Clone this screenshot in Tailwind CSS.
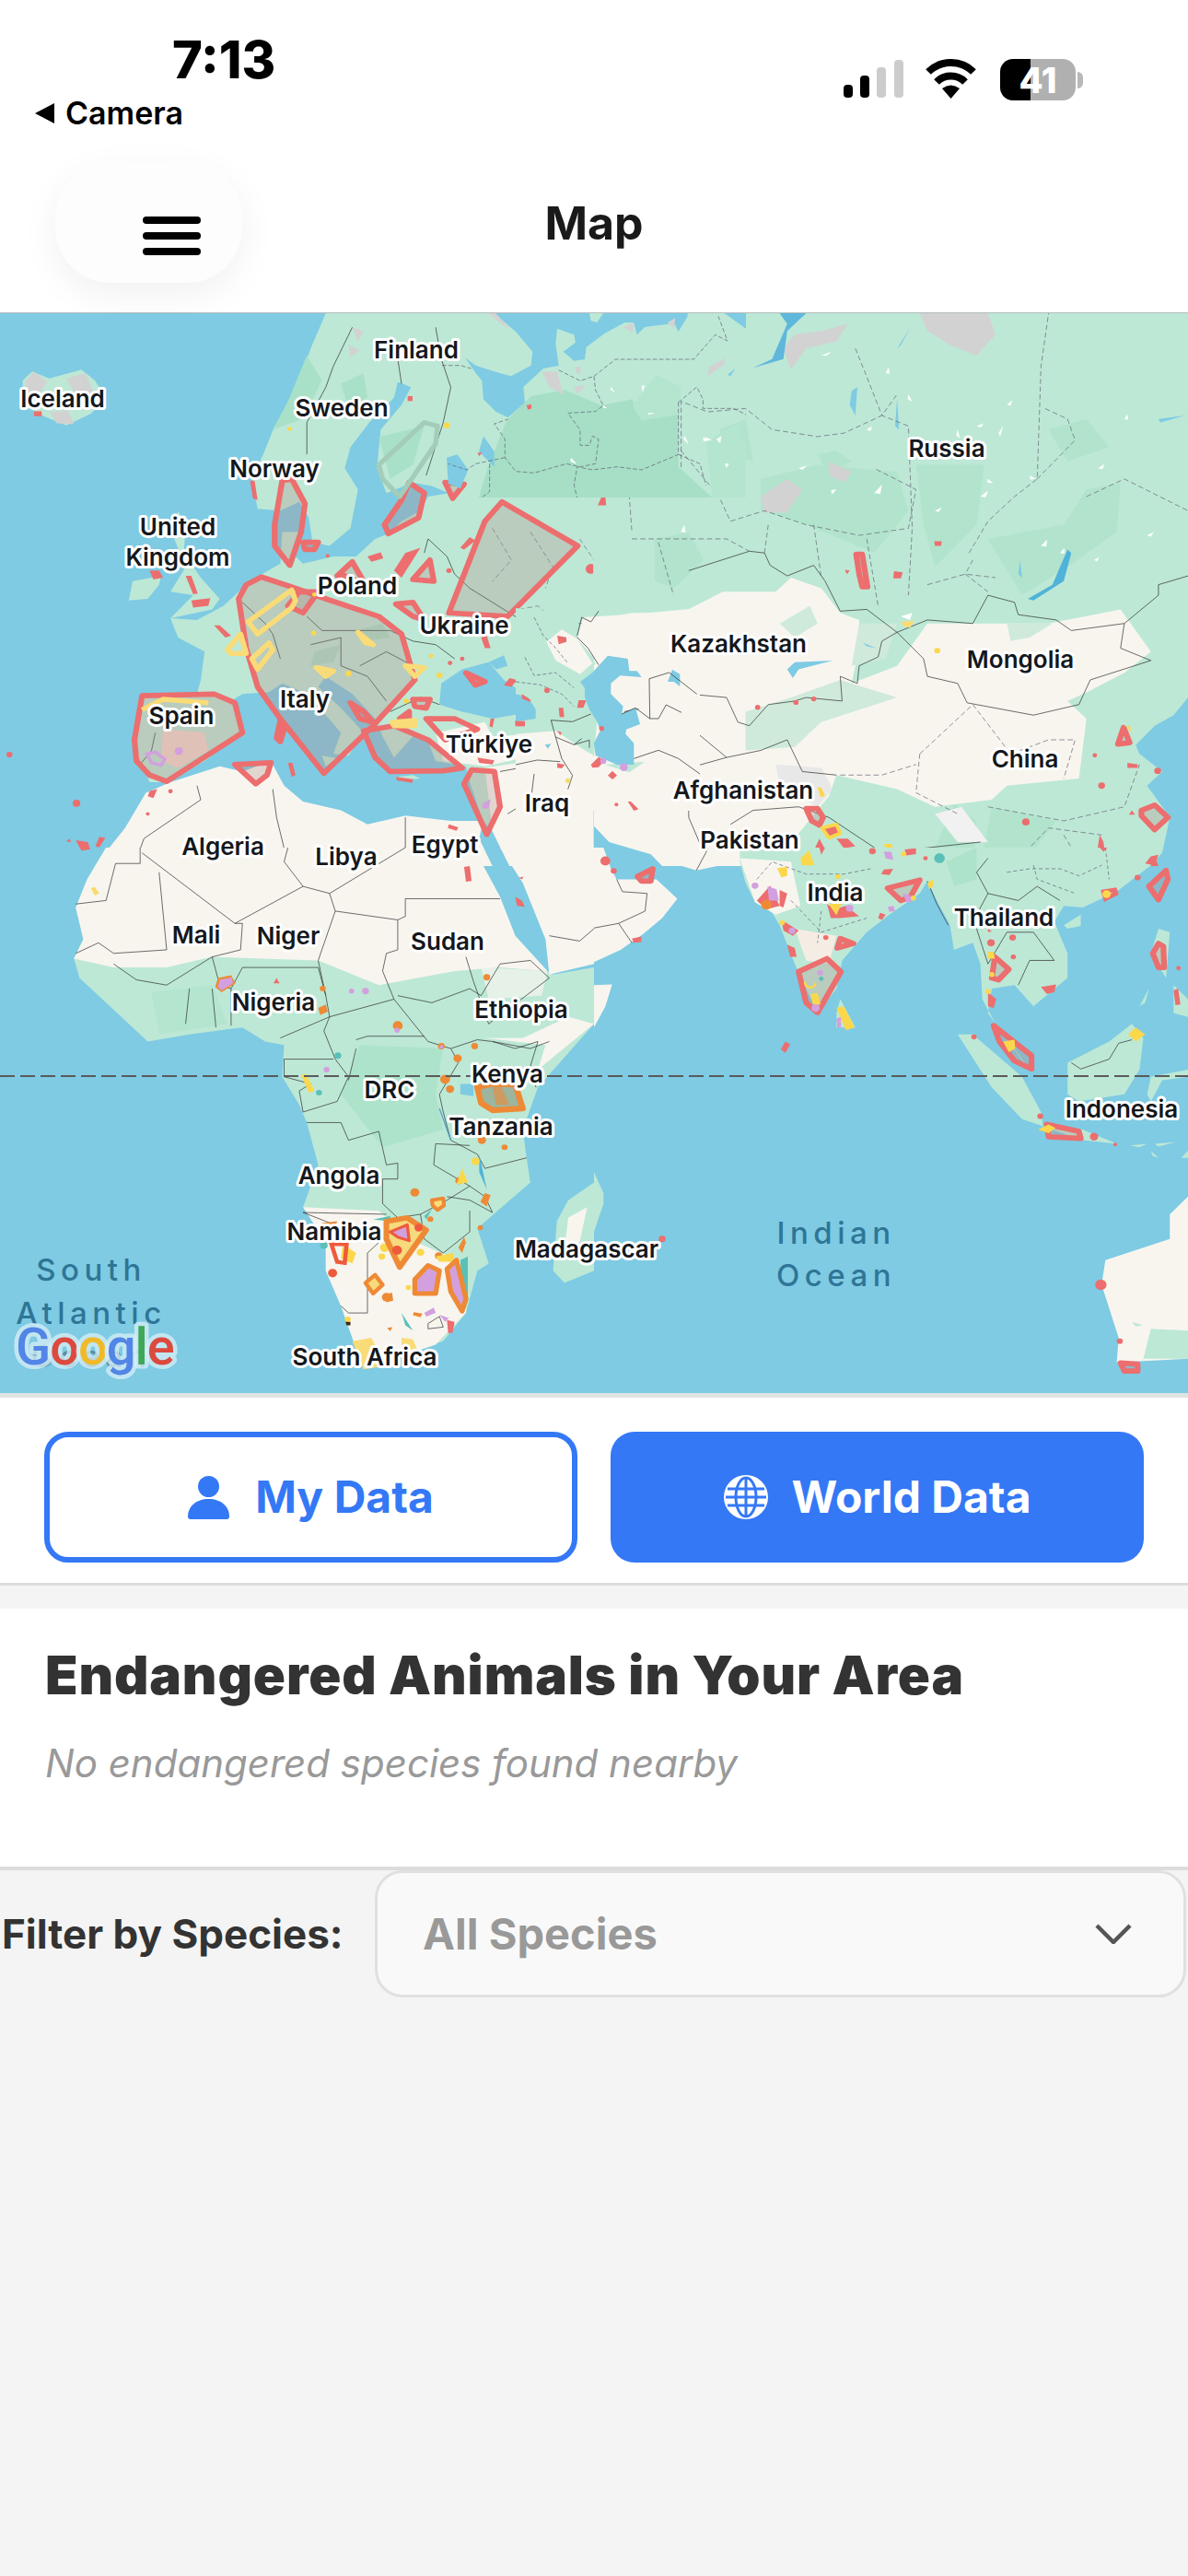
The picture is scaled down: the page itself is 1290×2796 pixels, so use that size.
<!DOCTYPE html>
<html lang="en">
<head>
    <meta charset="UTF-8">
    <meta name="viewport" content="width=device-width, initial-scale=1.0">
    <title>Map</title>
    <script src="https://cdn.jsdelivr.net/npm/@tailwindcss/browser@4"></script>
</head>
<body class="bg-[#f4f4f4] [font-family:Inter,sans-serif] overflow-hidden">
    <!-- Header -->
    <header class="h-[340px] bg-white border-b border-[#b5bcbc]">
        <div class="flex justify-between h-[176px]">
            <div>
                <div class="pl-[187px] pt-[34px] text-[56px] leading-[62px] font-extrabold text-black">7:13</div>
                <div class="pl-[38px] mt-[7px] flex items-center gap-[12px] text-[34px] leading-[40px] font-semibold text-black">
                    <svg class="w-[21px] h-[22px]" viewBox="0 0 21 22"><path d="M21 0V22L0 11Z" fill="#000"/></svg>
                    <span>Camera</span>
                </div>
            </div>
            <div class="flex items-start pt-[64px] pr-[114px]">
                <svg class="w-[65px] h-[43px]" viewBox="0 0 65 43">
                    <rect x="0" y="28" width="10" height="14" rx="4" fill="#000"/>
                    <rect x="18" y="18" width="10" height="24" rx="4" fill="#000"/>
                    <rect x="36" y="9" width="10" height="33" rx="4" fill="#ccc"/>
                    <rect x="55" y="1" width="10" height="41" rx="4" fill="#ccc"/>
                </svg>
                <svg class="w-[57px] h-[44px] ml-[23px]" viewBox="0 0 57 44">
                    <path d="M4 14A35 35 0 0 1 53 14" fill="none" stroke="#000" stroke-width="8"/>
                    <path d="M13 25A22 22 0 0 1 44 25" fill="none" stroke="#000" stroke-width="8"/>
                    <path d="M28.500 43L19 32Q28.500 25 38 32Z" fill="#000"/>
                </svg>
                <div class="ml-[25px] w-[82px] h-[45px] rounded-[14px] bg-[linear-gradient(90deg,#000_40%,#b0b0b0_40%)] flex items-center justify-center text-white text-[38px] font-extrabold leading-none">41</div>
                <div class="ml-[2px] mt-[14px] w-[6px] h-[18px] rounded-r-[6px] bg-[#b8b8b8]"></div>
            </div>
        </div>
        <div class="grid grid-cols-[1fr_auto_1fr] items-center">
            <div>
                <button class="ml-[60px] w-[203px] h-[131px] rounded-[60px] bg-[#fdfdfd] shadow-[0_12px_40px_rgba(0,0,0,0.06)] flex flex-col gap-[9px] pl-[95px] pt-[28px] justify-center">
                    <span class="block w-[63px] h-[8px] rounded-full bg-black"></span>
                    <span class="block w-[63px] h-[8px] rounded-full bg-black"></span>
                    <span class="block w-[63px] h-[8px] rounded-full bg-black"></span>
                </button>
            </div>
            <h1 class="text-[50px] font-bold text-[#1a1a1a] mt-[1px]">Map</h1>
            <div></div>
        </div>
    </header>

    <!-- Map -->
    <div class="h-[1172px] bg-[#7ecbe3] overflow-hidden">
        <svg class="block w-[1290px] h-[1172px]" viewBox="0 340 1290 1172">
            <rect x="0" y="340" width="1290" height="1172" fill="#7ecbe3"/>

            <!-- Europe, Mediterranean -->
            <g transform="translate(0,340) scale(.41135,.38265)">
                <g fill="#bde8d6">
                    <path d="M860,0 820,100 790,190 765,270 725,320 695,400 665,470 680,555 740,560 790,535 815,580 825,650 870,660 925,610 945,500 910,440 925,380 975,310 1040,240 1050,195 1085,210 1060,260 1005,330 995,440 1020,510 1090,480 1140,490 1185,510 1130,520 1110,560 1060,590 1025,625 990,640 940,690 880,690 800,710 780,690 790,620 745,620 740,710 660,760 590,830 520,870 450,865 470,920 540,960 530,1040 520,1080 370,1085 350,1220 395,1330 440,1330 540,1270 640,1190 610,1100 640,1080 710,1075 745,1050 790,1070 860,1140 900,1190 880,1250 920,1255 960,1190 900,1120 840,1060 860,1030 930,1080 990,1150 1010,1200 1040,1260 1090,1200 1130,1215 1150,1270 1230,1285 1240,1330 1275,1440 1300,1470 1345,1568 1568,1568 1568,0Z"/>
                    <path d="M470,560 490,610 485,680 530,750 580,810 560,840 450,865 510,800 450,790 490,720 460,640Z"/>
                    <path d="M350,760 400,750 425,745 420,770 390,810 340,815Z"/>
                    <path d="M60,190 85,165 130,185 215,160 250,190 280,240 240,285 175,318 100,285 60,255Z"/>
                    <path d="M735,1150 750,1170 745,1215 730,1210Z"/>
                    <path d="M1110,1320 1090,1310 1050,1315 1060,1325Z"/>
                    <path d="M850,1255 890,1262 860,1285Z"/>
                </g>
                <g fill="#7ecbe3">
                    <path d="M1165,1050 1220,1010 1290,990 1330,1040 1400,1090 1405,1130 1300,1150 1220,1130 1160,1110Z"/>
                    <path d="M1290,990 1330,970 1340,1000 1310,1010Z"/>
                </g>
                <g fill="#a9e1c8">
                    <path d="M810,120 760,250 720,330 800,300 850,190Z"/>
                    <path d="M1000,350 1120,320 1090,430 1030,470Z"/>
                    <path d="M830,960 900,940 880,990 820,1000Z"/>
                    <path d="M940,900 1010,880 1030,920 960,930Z"/>
                    <path d="M900,200 960,170 970,240 920,270Z"/>
                </g>
                <g fill="#d2d2d2">
                    <path d="M65,195 90,165 125,195 100,235 70,225Z"/>
                    <path d="M175,185 225,170 250,230 205,245Z"/>
                    <path d="M130,280 180,275 195,315 150,312Z"/>
                    <path d="M920,90 950,105 925,125Z"/>
                    <path d="M930,40 960,50 945,80Z"/>
                </g>
                <g fill="#f8f5ef">
                    <path d="M1275,1440 1190,1440 1070,1425 970,1450 900,1410 800,1385 750,1340 715,1270 640,1300 580,1285 450,1330 385,1360 330,1460 250,1568 1300,1568 1265,1490Z"/>
                    <path d="M1280,1290 1400,1270 1480,1240 1568,1180 1568,1568 1345,1568 1300,1470Z"/>
                    <path d="M1150,1190 1280,1160 1300,1200 1470,1190 1470,1240 1280,1285 1170,1270Z"/>
                </g>
                <path d="M430,1180 540,1190 550,1240 470,1290 425,1270Z" fill="#f5d9cf"/>
                <g fill="none" stroke="#333" stroke-width="1.800">
                    <path d="M930,40 880,150 860,210 810,310 810,400"/>
                    <path d="M1050,130 1060,200M1150,40 1165,130 1190,210 1170,310 1125,460"/>
                    <path d="M1120,680 1130,640 1180,690 1200,740 1240,780 1390,880"/>
                    <path d="M640,820 700,880 720,910 740,980M810,860 850,900 950,900 1030,900 1090,930"/>
                    <path d="M820,940 900,920 900,1000 970,1030 1020,1100M950,1000 1020,960 1090,1000"/>
                    <path d="M1090,930 1150,940 1200,980M1030,1130 1110,1090 1160,1110"/>
                    <path d="M1320,1300 1470,1270 1500,1320M1340,1420 1400,1380 1470,1240"/>
                    <path d="M520,1340 530,1380 380,1490 370,1520 280,1520M720,1350 730,1430 755,1540M1070,1430 1070,1568"/>
                    <path d="M410,1190 400,1240 370,1280"/>
                </g>
                <g fill="none" stroke="#667" stroke-width="1.600" stroke-dasharray="14 8">
                    <path d="M1370,840 1420,830 1470,880 1568,880M1390,880 1470,960 1420,1030"/>
                    <path d="M1300,610 1350,700 1300,760M1400,620 1460,720 1440,780"/>
                    <path d="M1530,640 1568,700"/>
                </g>
                <!-- range polygons -->
                <g fill="#b08a84" fill-opacity=".3" stroke="#ec6e6e" stroke-width="15" stroke-linejoin="round">
                    <path d="M630,810 650,770 690,748 780,780 860,810 1000,860 1060,910 1095,1040 985,1170 855,1305 740,1150 680,1060 650,950Z"/>
                    <path d="M375,1085 565,1080 620,1105 640,1190 440,1328 395,1310 360,1270 355,1210Z"/>
                    <path d="M960,1185 1040,1170 1130,1210 1220,1290 1170,1298 1030,1300 990,1260Z"/>
                    <path d="M1125,1150 1200,1150 1260,1180 1175,1210Z" fill="none"/>
                    <path d="M1225,1335 1245,1295 1305,1300 1320,1400 1285,1478Z"/>
                    <path d="M1325,535 1525,660 1340,860 1185,850 1280,590Z"/>
                    <path d="M745,475 770,470 805,540 795,620 765,715 725,660 725,600Z"/>
                    <path d="M1080,480 1120,510 1105,580 1025,625 1015,600 1060,530Z"/>
                    <path d="M1175,480 1225,485 1195,525Z"/>
                    <path d="M1090,755 1135,700 1145,760Z"/>
                    <path d="M890,745 930,705 965,770 900,740Z"/>
                    <path d="M1045,825 1090,820 1120,870 1090,860Z"/>
                    <path d="M620,1280 715,1275 705,1310 675,1335Z"/>
                    <path d="M800,650 840,650 830,670 805,670Z"/>
                    <path d="M790,790 840,790 800,850 760,830Z"/>
                    <path d="M925,1105 960,1130 985,1160 950,1150Z"/>
                    <path d="M1230,1020 1280,1045 1255,1055Z"/>
                    <path d="M1090,1095 1135,1095 1125,1120 1095,1115Z"/>
                    <path d="M1055,1150 1080,1130 1080,1155Z"/>
                    <path d="M740,1155 750,1180 740,1215 730,1205Z"/>
                </g>
                <g fill="none" stroke="#f9dc78" stroke-width="14" stroke-linejoin="round">
                    <path d="M655,875 770,785 780,815 770,835 680,910Z"/>
                    <path d="M600,955 635,910 650,965 610,965Z"/>
                    <path d="M665,980 710,935 720,955 680,1010Z"/>
                    <path d="M835,1005 880,1015 860,1030Z"/>
                    <path d="M945,905 985,940 965,935Z"/>
                    <path d="M1070,1000 1120,1005 1095,1030Z"/>
                    <path d="M1035,1160 1095,1155 1095,1170 1040,1170Z"/>
                    <path d="M375,1125 430,1095 550,1105"/>
                </g>
                <path d="M1000,430 1120,310 1155,320 1150,370 1055,520 1010,470Z" fill="none" stroke="#a3cdb9" stroke-width="13" stroke-linejoin="round"/>
                <g fill="#ec6e6e">
                    <path d="M395,730 420,730 430,750 405,755Z"/>
                    <path d="M490,745 505,745 522,795 510,797Z"/>
                    <path d="M505,815 555,808 550,830 510,835Z"/>
                    <path d="M565,885 580,885 610,915 595,920Z"/>
                    <path d="M660,475 672,475 680,530 668,525Z"/>
                    <path d="M970,690 1005,678 1012,695 980,705Z"/>
                    <path d="M1040,730 1070,680 1110,665 1060,750Z"/>
                    <path d="M1215,665 1240,635 1255,645 1225,670Z"/>
                    <path d="M1270,920 1285,915 1295,950 1280,950Z"/>
                    <path d="M1345,1035 1365,1040 1350,1060 1330,1055Z"/>
                    <path d="M1475,915 1495,920 1490,935 1470,935Z"/>
                    <path d="M1360,1155 1385,1155 1385,1170 1360,1170Z"/>
                    <path d="M1295,1150 1305,1150 1300,1175 1292,1172Z"/>
                    <path d="M1260,1260 1305,1268 1300,1280 1265,1275Z"/>
                    <path d="M1045,1315 1090,1322 1088,1332 1048,1325Z"/>
                    <path d="M1185,1450 1210,1458 1205,1468 1182,1460Z"/>
                    <path d="M760,1275 772,1275 780,1310 770,1315Z"/>
                    <path d="M395,1355 415,1350 405,1375 390,1370Z"/>
                    <path d="M200,1495 232,1500 238,1520 215,1525Z"/>
                    <path d="M262,1485 278,1488 262,1515 252,1512Z"/>
                    <path d="M175,1498 188,1500 183,1490Z"/>
                    <circle cx="25" cy="1252" r="8"/>
                    <circle cx="202" cy="1390" r="10"/>
                    <circle cx="450" cy="1356" r="6"/>
                    <rect x="1076" y="235" width="13" height="14"/>
                    <rect x="90" y="278" width="20" height="14"/>
                    <circle cx="1185" cy="730" r="7"/>
                    <circle cx="1188" cy="992" r="6"/>
                    <circle cx="1220" cy="980" r="6"/>
                    <circle cx="1440" cy="1068" r="6"/>
                    <circle cx="1560" cy="725" r="14"/>
                    <circle cx="865" cy="688" r="5"/>
                    <circle cx="390" cy="1420" r="5"/>
                </g>
                <g fill="#d3a0df">
                    <path d="M388,1250 410,1245 435,1265 425,1282 400,1275Z" fill="none" stroke="#d3a0df" stroke-width="9"/>
                    <circle cx="472" cy="1242" r="11"/>
                    <path d="M1275,1390 1295,1378 1290,1405 1272,1405Z"/>
                </g>
                <g fill="#fbd84b">
                    <circle cx="1180" cy="318" r="8"/>
                    <circle cx="765" cy="328" r="6"/>
                    <circle cx="828" cy="907" r="7"/>
                    <circle cx="920" cy="1022" r="8"/>
                    <circle cx="1160" cy="1027" r="8"/>
                    <circle cx="1138" cy="972" r="6"/>
                    <circle cx="1072" cy="1100" r="7"/>
                    <circle cx="830" cy="798" r="6"/>
                </g>
            </g>

            <!-- Russia, Central Asia, China -->
            <g transform="translate(645,340) scale(.41135,.38265)">
                <rect x="-2" y="0" width="1572" height="1568" fill="#bde8d6"/>
                <g fill="#b2e4cd">
                    <path d="M440,470 590,430 800,450 830,560 740,680 560,600 440,560Z"/>
                    <path d="M850,430 1030,430 1010,600 900,720 870,600Z"/>
                    <path d="M1040,640 1240,600 1300,500 1390,480 1380,620 1250,720 1130,800Z"/>
                    <path d="M160,640 250,620 290,700 210,780 160,760Z"/>
                    <path d="M590,400 640,390 680,420 620,460Z"/>
                    <path d="M950,1390 1010,1440 1000,1568 880,1568Z"/>
                    <path d="M1050,1400 1220,1440 1130,1568 1020,1568Z"/>
                    <path d="M330,330 400,300 420,420 360,400Z"/>
                    <path d="M1200,330 1300,300 1360,380 1250,420Z"/>
                </g>
                <g fill="#f8f5ef">
                    <path d="M0,870 100,850 230,850 340,790 480,790 520,750 600,780 650,850 700,870 700,950 680,1050 800,1000 880,880 1050,880 1200,880 1390,840 1470,960 1400,1020 1310,1070 1250,1100 1300,1150 1280,1320 1090,1340 1050,1380 900,1400 800,1350 640,1310 620,1370 470,1568 270,1568 0,1568Z"/>
                </g>
                <g fill="#cfeadb">
                    <path d="M490,880 570,830 590,880 530,920Z"/>
                    <path d="M700,880 800,880 770,980 680,1000Z"/>
                    <path d="M400,1130 520,1090 650,1040 800,1090 600,1160 530,1230 400,1240Z"/>
                    <path d="M1090,880 1210,880 1150,920 1100,930Z"/>
                </g>
                <g fill="#d2d2d2">
                    <path d="M860,0 1040,0 1060,60 1010,120 940,90 880,50Z"/>
                    <path d="M440,520 510,470 550,500 510,565 450,565Z"/>
                    <path d="M500,100 530,60 600,50 670,30 640,80 560,100 520,160Z"/>
                    <path d="M620,420 680,450 660,480 620,460Z"/>
                </g>
                <path d="M480,1280 600,1290 630,1350 590,1400 490,1340Z" fill="#e8e8e8"/>
                <path d="M900,1420 970,1400 1040,1500 960,1500Z" fill="#f1f1f1"/>
                <g fill="#7ecbe3">
                    <path d="M510,1010 530,990 630,985 540,1010 525,1035Z"/>
                    <path d="M1145,810 1210,770 1250,670 1260,680 1240,760 1160,815Z" fill="#4fb3d9"/>
                    <path d="M420,155 500,130 510,50 560,0 490,0 510,30 470,130Z" fill="#5fb7dc"/>
                    <path d="M0,1455 40,1500 150,1535 180,1568 0,1568Z"/>
                    <path d="M1568,1090 1530,1140 1480,1170 1430,1225 1440,1250 1500,1300 1460,1340 1520,1430 1500,1530 1470,1568 1568,1568Z"/>
                    <path d="M800,100 835,40 810,90 800,100Z"/>
                    <path d="M710,935 745,950 720,945Z"/>
                    <path d="M1490,300 1560,290 1495,310Z"/>
                    <path d="M1125,700 1130,750 1120,740Z"/>
                    <path d="M800,240 805,330 795,320Z"/>
                    <path d="M680,220 695,210 690,290 675,260Z"/>
                </g>
                <!-- white slivers in the taiga -->
                <path d="M290,350l30,12l-22,-4zM340,440l18,-16l-6,18zM540,440l22,-8l-12,12zM740,510l20,-24l-4,26zM1020,520l20,-16l-6,18zM960,330l6,24l-10,-8zM1080,320l-8,30l-4,-10zM830,230l10,20l-12,-6zM1150,460l16,10l-14,2zM1090,260l14,-14l-4,16zM1330,440l18,-12l-6,14zM1180,660l16,-18l-2,20zM900,560l18,-10l-8,14zM720,330l14,-10l-4,14zM600,120l28,-12l-14,12zM770,170l8,-18l2,20zM1040,470l14,12l-16,-2zM1230,680l12,-14l0,16zM1460,630l18,-10l-8,14zM1320,700l14,-8l-6,12zM230,620l8,-20l4,22zM1400,300l8,-14l2,16zM810,860l30,-10l-6,20zM1010,320l18,-8l-6,12zM640,500l-12,14l-2,-12z" fill="#fff"/>
                <g fill="none" stroke="#333" stroke-width="1.800">
                    <path d="M250,730 410,675 450,680 465,715 510,745 580,715 610,760 650,845 720,840 800,905 880,870 1000,880 1040,800 1110,820 1120,855 1220,870 1260,900 1400,880 1490,800 1490,770 1568,745"/>
                    <path d="M800,905 760,930 750,975 700,1000 695,1050 650,1030 655,1100 560,1090 530,1100 460,1110 410,1170 380,1160 350,1090 250,1080 200,1020 150,1040 150,1150"/>
                    <path d="M800,905 870,980 880,1030 960,1050 985,1105 1160,1140 1280,1110 1310,1040 1470,985 1390,950 1400,880"/>
                    <path d="M80,1130 180,1110 230,1120 260,1180 350,1260 440,1240 510,1210 550,1300 640,1310"/>
                    <path d="M90,1280 170,1240 250,1290 350,1260M250,1340 250,1430 290,1530M360,1450 420,1410 540,1400 620,1430 760,1530 1020,1500"/>
                </g>
                <g fill="none" stroke="#667" stroke-width="1.800" stroke-dasharray="14 8">
                    <path d="M0,470 100,430 230,390 330,520 360,590 450,560 560,600 700,630 830,610 850,500 740,440"/>
                    <path d="M100,640 350,640 410,675M450,680 460,600"/>
                    <path d="M690,100 720,180 760,290 830,320 840,610 830,800"/>
                    <path d="M990,680 1040,590 1110,520 1170,470 1180,150 1200,0"/>
                    <path d="M1170,470 1270,360 1250,300 1190,270M1300,520 1400,470 1568,560"/>
                    <path d="M1000,700 980,740 1040,790M880,770 980,740 1060,750"/>
                    <path d="M580,600 600,750M720,640 750,830M170,650 210,800M90,470 100,620"/>
                    <path d="M230,480 230,250 300,280 400,270 470,330 590,350 660,340 760,290 800,230"/>
                    <path d="M860,1250 1000,1110 1100,1250 1200,1210 1270,1210 1240,1320"/>
                    <path d="M860,1250 850,1360 960,1420M650,1310 760,1310 850,1280"/>
                    <path d="M1040,1400 1240,1440 1400,1400 1440,1280M1110,1560 1200,1460 1340,1480M1240,1480 1290,1568"/>
                </g>
                <g fill="#ec6e6e">
                    <path d="M20,520 30,520 32,545 10,545Z"/>
                    <path d="M662,728 675,730 668,740Z"/>
                    <path d="M792,732 815,735 810,752 790,752Z"/>
                    <path d="M898,647 918,647 916,660 900,660Z"/>
                    <circle cx="432" cy="1118" r="7"/>
                    <circle cx="533" cy="1104" r="7"/>
                    <circle cx="580" cy="1094" r="7"/>
                    <path d="M640,1490 670,1490 690,1512 660,1518Z"/>
                    <path d="M595,1490 610,1520 600,1540 580,1525Z"/>
                    <circle cx="735" cy="1525" r="9"/>
                    <path d="M820,1520 850,1518 850,1535 825,1540Z"/>
                    <circle cx="1140" cy="1443" r="10"/>
                    <circle cx="1340" cy="1340" r="9"/>
                    <circle cx="1488" cy="1298" r="9"/>
                    <circle cx="1322" cy="1254" r="6"/>
                    <path d="M1408,1275 1436,1280 1434,1290 1408,1290Z"/>
                    <path d="M1420,1410 1428,1422 1412,1422Z"/>
                    <path d="M1335,1480 1345,1500 1352,1560 1325,1550Z"/>
                    <path d="M1475,1530 1490,1568 1460,1568Z"/>
                    <path d="M270,1515 276,1522 264,1522Z"/>
                    <circle cx="30" cy="1552" r="11"/>
                </g>
                <g fill="#b08a84" fill-opacity=".3" stroke="#ec6e6e" stroke-width="15" stroke-linejoin="round">
                    <path d="M692,684 708,684 722,776 708,776 700,740Z"/>
                    <path d="M1383,1222 1398,1175 1414,1218Z"/>
                    <path d="M1445,1410 1480,1395 1515,1430 1480,1465 1445,1425Z"/>
                    <path d="M560,1405 590,1405 605,1430 595,1452 575,1440Z"/>
                </g>
                <path d="M1395,1172 1415,1170 1418,1190 1405,1170Z" fill="#fbd84b"/>
                <path d="M602,1460 640,1450 650,1475 620,1488Z" fill="#ec6e6e" stroke="#fbd84b" stroke-width="10" stroke-linejoin="round"/>
                <g fill="#fbd84b">
                    <path d="M812,875 845,872 835,892 815,888Z" fill="#f9dc78"/>
                    <circle cx="906" cy="957" r="8"/>
                    <path d="M590,1345 600,1345 610,1370 598,1372Z"/>
                    <path d="M545,1550 568,1525 582,1568 548,1568Z"/>
                    <path d="M765,1505 785,1505 790,1520 770,1518Z"/>
                    <circle cx="817" cy="1532" r="8"/>
                    <circle cx="966" cy="1530" r="6"/>
                    <circle cx="455" cy="1545" r="9"/>
                </g>
                <path d="M762,1530 780,1528 795,1548 772,1550Z" fill="#d3a0df"/>
                <circle cx="912" cy="1548" r="14" fill="#5bc0b8"/>
            </g>

            <!-- Northern seas and the Russian forest belt, traced at 3x from (480,340) -->
            <g transform="translate(480,340) scale(.33333)">
                <path d="M210,350 290,270 400,250 520,300 620,280 650,350 770,300 770,500 880,600 120,600 150,500Z" fill="#a6dfc5"/>
                <path d="M620,300 700,200 780,240 770,330 650,350Z" fill="#b4e5cf"/>
                <path d="M860,420 960,360 990,430 990,600 880,600Z" fill="#b4e5cf"/>
                <g fill="#7ecbe3">
                    <path d="M170,0 240,60 295,125 290,170 225,205 170,190 110,170 75,145 110,195 130,220 135,280 175,320 215,340 270,290 265,240 330,180 380,170 370,100 375,50 430,70 435,95 395,125 430,155 465,150 470,110 530,65 595,30 625,30 635,70 660,45 735,35 755,30 770,60 800,10 800,0Z"/>
                    <path d="M920,0 990,50 990,0Z"/>
                    <path d="M15,470 50,460 85,510 60,570 20,555Z"/>
                    <path d="M120,450 135,400 170,450 170,500 140,470Z"/>
                    <path d="M930,200 955,180 940,205Z"/>
                </g>
                <path d="M480,0 525,0 505,30 485,25Z" fill="#bde8d6"/>
                <g fill="#d2d2d2">
                    <path d="M150,0 175,0 220,50 200,40Z"/>
                    <path d="M325,190 375,190 395,265 350,240Z"/>
                    <path d="M435,175 452,175 450,198 438,195Z"/>
                    <path d="M430,240 470,235 440,262Z"/>
                    <path d="M590,45 625,30 620,62Z"/>
                    <path d="M735,30 760,15 755,50Z"/>
                    <path d="M870,175 925,145 915,170 865,205Z"/>
                </g>
                <g fill="none" stroke="#667" stroke-width="2.200" stroke-dasharray="14 7">
                    <path d="M380,185 450,220 495,205 565,150 820,150 890,70 930,90 900,10"/>
                    <path d="M495,205 500,250 525,300 500,320 410,325 450,380 450,430 480,430 490,400 510,410 500,490 450,500 405,490 300,520 240,515 205,470 205,410 170,360 215,345"/>
                    <path d="M205,470 110,490 80,510 20,490M155,490 155,580 130,600"/>
                    <path d="M770,290 770,460 650,510 570,500 490,510 440,500 430,560 440,600M770,460 840,490 860,560"/>
                    <path d="M770,290 830,240 850,280 850,310 950,310 990,330"/>
                    <path d="M0,170 60,170 95,180"/>
                </g>
                <path d="M550,240l14,18l-16,-10zM670,325l24,0l-20,6zM420,470l20,22l-22,-10zM850,405l30,8l-28,4zM790,400l14,26l-18,-16zM910,400l-4,24l-12,-14zM935,490l-8,14l-6,-14zM660,235l-6,22l-4,-20zM525,300l14,10l-14,-2z" fill="#fff"/>
                <path d="M275,300 290,296 292,310 280,314Z" fill="#ec6e6e"/>
                <path d="M115,455 130,452 122,466Z" fill="#ec6e6e"/>
                <circle cx="15" cy="365" r="9" fill="#fbd84b"/>
            </g>

            <!-- Africa -->
            <g transform="translate(0,920) scale(.41135,.38265)">
                <path d="M280,0 230,90 200,170 220,260 195,315 210,370 280,440 390,550 500,530 640,510 700,550 750,560 745,650 790,730 810,780 830,860 840,900 800,1020 860,1120 860,1200 900,1300 930,1390 960,1480 1060,1440 1170,1400 1230,1320 1260,1200 1290,1180 1260,1080 1400,950 1390,880 1380,800 1420,680 1568,500 1568,340 1460,360 1445,350 1360,250 1320,140 1260,20 1250,0Z" fill="#bde8d6"/>
                <path d="M280,0 230,90 200,170 220,260 195,315 300,340 440,340 560,310 840,320 1000,390 1200,350 1320,340 1445,350 1360,250 1320,140 1260,20 1250,0Z" fill="#f8f5ef"/>
                <path d="M1320,0 1380,100 1440,260 1450,360 1568,330 1568,0Z" fill="#f8f5ef"/>
                <path d="M1270,340 1445,350 1430,420 1290,430Z" fill="#f8f5ef" opacity=".7"/>
                <path d="M1280,540 1440,560 1420,630 1568,500 1500,480 1380,540Z" fill="#f8f5ef"/>
                <path d="M800,1020 1000,1030 1100,1120 1230,1180 1230,1320 1150,1410 960,1480 930,1390 900,1300 860,1200 860,1120Z" fill="#f8f5ef"/>
                <path d="M950,560 1170,570 1150,700 1170,800 1010,850 900,700Z" fill="#aee3cb"/>
                <path d="M400,410 560,390 600,500 420,530Z" fill="#b4e5cf"/>
                <path d="M1568,950 1500,1000 1470,1060 1460,1200 1490,1235 1568,1200Z" fill="#bde8d6"/>
                <path d="M1500,1050 1550,1020 1530,1120 1490,1140Z" fill="#f8f5ef"/>
                <g fill="none" stroke="#333" stroke-width="1.800">
                    <path d="M370,0 370,45 305,45 280,150 200,160M375,15 620,215 800,110 870,130 1070,0M420,70 440,290 300,300 260,270 200,300"/>
                    <path d="M620,215 640,215 635,290 560,310 440,390 360,375 300,330M560,310 580,390 610,400 610,505M500,400 490,500M560,400 570,510"/>
                    <path d="M800,110 750,40 760,0M870,130 885,180 840,320 860,420 840,340 640,340 610,400M885,180 1050,205 1070,195 1070,145 1320,145M1050,205 1050,290 1020,300 1010,350 1040,430 1130,550 1190,570 1260,545 1300,550 1400,570 1450,550"/>
                    <path d="M860,420 870,480 740,540M1040,430 870,480 855,520 885,600 920,650 890,720 800,750 790,690 820,670 750,650 750,600 880,600M940,570 920,660M940,545 970,535 1120,535"/>
                    <path d="M1190,570 1210,610 1160,700 1170,750 1190,830 1260,870 1280,910 1390,880M810,780 900,780 920,830 1000,805 1020,900 1050,895 1050,940 1010,940 1010,1010 1050,1050 1110,1040 1180,1000 1240,960 1280,990 1300,1035 1240,1000 1180,990"/>
                    <path d="M1240,960 1145,900 1150,840 1240,845M1020,1040 800,1035 860,1060 1000,1120 970,1150 970,1320 920,1320 900,1300"/>
                    <path d="M1110,1040 1120,1110 1170,1150 1240,1090 1240,1030M1230,310 1250,380 1290,500 1450,370 1400,320 1320,330 1270,420 1240,400 1140,440 1050,420"/>
                    <path d="M1300,550 1360,570 1420,550 1400,620 1415,680M1450,250 1530,265 1568,230M1130,1350 1160,1330 1170,1360 1130,1365Z"/>
                </g>
                <path d="M1160,740 1190,830" fill="none" stroke="#4a9ec9" stroke-width="3"/>
                <path d="M1265,870 1285,970 1265,920Z" fill="#4fb3d9"/>
                <path d="M1215,670 1250,670 1250,705 1215,700Z" fill="#7ecbe3"/>
                <g fill="#5bc0b8">
                    <path d="M985,1055 1030,1045 1030,1060Z"/>
                    <path d="M1120,1045 1140,1025 1125,1055Z"/>
                    <path d="M1215,1170 1235,1160 1235,1290 1220,1260Z"/>
                    <circle cx="892" cy="590" r="9"/>
                    <circle cx="842" cy="695" r="8"/>
                    <path d="M1060,1320 1090,1370 1070,1355Z"/>
                    <circle cx="855" cy="1128" r="10"/>
                </g>
                <g fill="#ee8a36">
                    <path d="M575,370 610,362 622,385 585,410 568,395Z"/>
                    <circle cx="852" cy="400" r="8"/>
                    <path d="M840,455 860,445 865,465 845,475Z"/>
                    <circle cx="1285" cy="368" r="9"/>
                    <circle cx="1050" cy="505" r="13"/>
                    <circle cx="1165" cy="563" r="9"/>
                    <circle cx="1253" cy="563" r="9"/>
                    <circle cx="1208" cy="598" r="11"/>
                    <circle cx="1175" cy="657" r="13"/>
                    <circle cx="1188" cy="685" r="11"/>
                    <circle cx="1272" cy="830" r="11"/>
                    <circle cx="1332" cy="850" r="8"/>
                    <circle cx="1095" cy="978" r="12"/>
                    <path d="M1280,980 1295,985 1285,1018 1268,1005Z"/>
                    <circle cx="1268" cy="1078" r="7"/>
                    <circle cx="1136" cy="1054" r="8"/>
                    <path d="M1210,1135 1225,1105 1230,1120 1220,1150Z"/>
                    <circle cx="1158" cy="1158" r="10"/>
                    <path d="M1010,1270 1035,1262 1038,1285 1020,1290Z"/>
                    <circle cx="1212" cy="945" r="10"/>
                    <path d="M1092,1318 1115,1322 1110,1332 1090,1326Z"/>
                    <path d="M1022,1362 1036,1360 1030,1372Z"/>
                </g>
                <g fill="#fbd84b">
                    <path d="M240,115 250,112 262,130 250,135Z" fill="#f7dc6a"/>
                    <path d="M795,645 808,642 830,690 815,695Z"/>
                    <path d="M1220,910 1235,950 1205,955Z"/>
                    <circle cx="1255" cy="890" r="11"/>
                    <path d="M930,1400 980,1390 1020,1470 960,1480Z" fill="#f9dc78"/>
                    <path d="M1060,1390 1090,1395 1100,1420 1060,1430Z" fill="#f9dc78"/>
                    <circle cx="1008" cy="1160" r="9"/>
                    <circle cx="1110" cy="1148" r="10"/>
                    <circle cx="1015" cy="1135" r="12"/>
                    <path d="M1150,1160 1195,1150 1200,1175 1160,1175Z"/>
                    <circle cx="1078" cy="1248" r="7"/>
                    <circle cx="918" cy="1338" r="8"/>
                    <path d="M905,1125 940,1150 930,1180 900,1165Z"/>
                </g>
                <g fill="#d3a0df">
                    <path d="M580,375 612,368 615,385 585,405 575,395Z"/>
                    <circle cx="928" cy="407" r="7"/>
                    <circle cx="965" cy="407" r="9"/>
                    <circle cx="1048" cy="518" r="7"/>
                    <circle cx="1165" cy="565" r="5"/>
                    <circle cx="862" cy="630" r="8"/>
                    <path d="M1120,1320 1145,1305 1150,1320 1125,1330Z"/>
                    <path d="M1160,1325 1185,1335 1175,1345Z"/>
                </g>
                <path d="M1260,680 1300,670 1360,672 1380,740 1300,745 1270,725Z" fill="#9cb59f" stroke="#ee8a36" stroke-width="16" stroke-linejoin="round"/>
                <path d="M1300,680 1320,670 1345,730 1310,730Z" fill="#ee8a36" opacity=".6"/>
                <path d="M1020,1060 1075,1050 1125,1085 1055,1190 1020,1110Z" fill="#f8d97c" stroke="#ee8a36" stroke-width="15" stroke-linejoin="round"/>
                <path d="M1030,1090 1075,1070 1080,1115 1050,1105Z" fill="#d3a0df" stroke="#ee5a3c" stroke-width="8" stroke-linejoin="round"/>
                <circle cx="1048" cy="1142" r="13" fill="#ee5a3c"/>
                <circle cx="1105" cy="1078" r="11" fill="#ee5a3c"/>
                <path d="M1140,1000 1170,995 1172,1015 1155,1028 1142,1015Z" fill="#f9dc78" stroke="#ee8a36" stroke-width="10" stroke-linejoin="round"/>
                <path d="M1095,1225 1130,1185 1160,1200 1150,1265 1095,1265Z" fill="#d3a0df" stroke="#ee8a36" stroke-width="13" stroke-linejoin="round"/>
                <path d="M1180,1195 1205,1170 1230,1280 1220,1315 1190,1260Z" fill="#d3a0df" stroke="#ee8a36" stroke-width="13" stroke-linejoin="round"/>
                <path d="M965,1235 990,1212 1010,1240 985,1265Z" fill="#f8d97c" stroke="#ee8a36" stroke-width="11" stroke-linejoin="round"/>
                <path d="M875,1125 915,1125 910,1178 890,1175Z" fill="none" stroke="#ee5a3c" stroke-width="11"/>
                <path d="M850,1065 890,1060 885,1075 855,1075Z" fill="#ee8a36"/>
                <circle cx="878" cy="1207" r="12" fill="#ee5a3c"/>
                <circle cx="1020" cy="1275" r="12" fill="#ee8a36"/>
                <g fill="#ec6e6e">
                    <path d="M1225,55 1240,52 1245,95 1230,97Z"/>
                    <path d="M1360,140 1378,150 1385,168 1365,165Z"/>
                    <path d="M1180,1340 1200,1345 1195,1375 1183,1378Z"/>
                    <path d="M722,385 730,370 738,385Z"/>
                    <path d="M1370,85 1382,82 1378,90Z"/>
                </g>
                <path d="M912,1345 925,1345 925,1355 915,1355Z" fill="#3c2a14"/>
            </g>

            <!-- Indian Ocean, South East Asia, Australia -->
            <g transform="translate(645,920) scale(.41135,.38265)">
                <path d="M0,0 25,0 45,60 60,90 125,90 165,90 220,145 180,200 130,245 70,290 0,325Z" fill="#f8f5ef"/>
                <path d="M150,0 165,30 270,65 380,40 400,0Z" fill="#f8f5ef"/>
                <path d="M385,40 400,100 425,155 470,185 490,220 530,330 590,470 640,400 655,320 720,240 780,190 860,130 880,95 905,150 940,220 950,290 1000,270 1020,330 1025,430 1060,500 1130,600 1155,640 1100,560 1040,470 1050,400 1110,390 1160,450 1250,370 1250,300 1215,210 1240,165 1290,170 1380,125 1470,50 1495,0 385,0Z" fill="#bde8d6"/>
                <path d="M385,30 520,40 545,165 480,190 425,155Z" fill="#f8f5ef"/>
                <path d="M530,230 640,250 620,330 560,320Z" fill="#f5ece3"/>
                <path d="M930,40 1010,0 1010,90 950,110Z" fill="#aee3cb"/>
                <path d="M0,390 48,388 30,450 0,510Z" fill="#f8f5ef"/>
                <g fill="#bde8d6">
                    <path d="M1240,220 1285,190 1285,222 1250,230Z"/>
                    <path d="M650,430 690,510 640,510 640,470Z"/>
                    <path d="M960,530 1000,530 1130,650 1180,750 1185,790 1130,770 1050,680Z"/>
                    <path d="M1180,790 1290,800 1380,840 1290,830Z"/>
                    <path d="M1250,610 1360,550 1420,500 1450,540 1440,630 1400,700 1280,720 1250,700Z"/>
                    <path d="M1470,650 1568,630 1568,650 1500,660 1470,720 1460,700Z"/>
                    <path d="M1490,230 1520,240 1510,370 1470,300Z"/>
                    <path d="M1530,390 1568,430 1568,480 1530,470Z"/>
                    <path d="M1415,845 1460,840 1440,850Z"/>
                    <path d="M1480,840 1535,835 1490,848Z"/>
                    <path d="M1470,860 1490,880 1475,875Z"/>
                    <path d="M1568,860 1550,880 1568,880Z"/>
                    <path d="M1440,450 1465,400 1455,440Z"/>
                    <path d="M0,920 25,980 25,1010 0,1090Z"/>
                </g>
                <path d="M1568,990 1520,1040 1520,1110 1350,1170 1340,1240 1385,1390 1380,1460 1568,1450Z" fill="#f8f5ef"/>
                <path d="M1568,1370 1470,1365 1450,1450 1568,1450Z" fill="#bde8d6"/>
                <path d="M1420,1345 1450,1355 1430,1358Z" fill="#bde8d6"/>
                <g fill="none" stroke="#333" stroke-width="1.800">
                    <path d="M60,90 75,125 140,130 135,180 65,215 0,228M65,215 100,270"/>
                    <path d="M270,65 295,15 300,0M880,95 905,160 935,220M1010,230 1040,330 1090,240 1160,240 1215,320 1150,320 1120,390"/>
                    <path d="M1000,230 1020,170 1040,130 1120,150 1170,110 1230,150M1040,130 1010,70 1040,30"/>
                    <path d="M1260,610 1285,628 1360,600 1385,555 1420,545"/>
                </g>
                <g fill="none" stroke="#667" stroke-width="1.800" stroke-dasharray="10 7">
                    <path d="M430,90 470,40 560,75 660,75 730,60M520,150 600,240 660,220 720,200M600,180 590,270"/>
                    <path d="M1090,70 1150,60 1230,60 1280,80 1340,50M1160,50 1170,90 1270,130M1350,0 1360,90"/>
                </g>
                <g fill="#b08a84" fill-opacity=".3" stroke="#ec6e6e" stroke-width="15" stroke-linejoin="round">
                    <path d="M540,352 615,315 652,352 590,468 560,440Z"/>
                    <path d="M775,115 860,92 835,140 810,150Z"/>
                    <path d="M115,82 155,60 150,95 125,95Z"/>
                    <path d="M642,285 650,258 685,272Z"/>
                    <path d="M1058,310 1095,345 1068,375 1050,370Z"/>
                    <path d="M1055,505 1155,590 1155,628 1110,605 1070,550Z"/>
                    <path d="M1195,785 1280,805 1285,825 1200,820Z"/>
                    <path d="M1490,272 1503,280 1505,340 1490,340 1475,300Z"/>
                    <path d="M1510,65 1515,90 1490,148 1465,110Z"/>
                    <path d="M1390,1462 1435,1465 1435,1485 1400,1485Z"/>
                </g>
                <g fill="#ec6e6e">
                    <path d="M430,150 465,108 490,165 455,175Z"/>
                    <path d="M490,120 510,130 500,170 490,165Z"/>
                    <path d="M615,160 635,175 665,165 700,195 650,200 625,200Z"/>
                    <path d="M495,205 540,235 525,250 500,235Z"/>
                    <path d="M510,275 530,285 535,310 518,310Z"/>
                    <path d="M755,185 770,190 760,205 750,200Z"/>
                    <path d="M765,62 790,60 780,78 758,75Z"/>
                    <circle cx="612" cy="255" r="7"/>
                    <circle cx="30" cy="38" r="13"/>
                    <circle cx="52" cy="66" r="8"/>
                    <path d="M100,258 125,252 125,268 105,270Z"/>
                    <path d="M505,550 518,558 505,582 493,572Z"/>
                    <circle cx="180" cy="1110" r="9"/>
                    <path d="M1040,230 1050,238 1040,240Z"/>
                    <circle cx="1048" cy="270" r="10"/>
                    <circle cx="1105" cy="255" r="9"/>
                    <circle cx="1107" cy="310" r="7"/>
                    <path d="M1180,395 1220,388 1215,410 1195,415Z"/>
                    <path d="M1040,410 1062,430 1055,455 1040,450Z"/>
                    <circle cx="1178" cy="762" r="8"/>
                    <circle cx="1320" cy="820" r="11"/>
                    <circle cx="1376" cy="842" r="5"/>
                    <circle cx="1338" cy="1240" r="15"/>
                    <circle cx="1388" cy="1400" r="8"/>
                    <circle cx="1003" cy="537" r="7"/>
                    <circle cx="1543" cy="342" r="6"/>
                    <path d="M1530,405 1542,400 1548,445 1535,447Z"/>
                    <circle cx="1435" cy="85" r="8"/>
                    <path d="M1345,125 1375,120 1378,130 1350,145Z" fill="none" stroke="#ec6e6e" stroke-width="12"/>
                    <path d="M1470,25 1490,20 1480,50 1455,45Z"/>
                    <circle cx="735" cy="10" r="9"/>
                    <path d="M820,5 850,2 850,18 825,22Z"/>
                    <circle cx="875" cy="30" r="6"/>
                    <path d="M1335,0 1355,0 1345,12Z"/>
                    <path d="M595,0 610,0 600,20Z"/>
                </g>
                <g fill="#fbd84b">
                    <path d="M545,30 568,8 582,50 548,50Z"/>
                    <path d="M483,58 510,55 510,80 495,85Z"/>
                    <path d="M620,160 655,155 640,192Z"/>
                    <circle cx="644" cy="82" r="7"/>
                    <path d="M880,100 895,90 895,110 885,118Z"/>
                    <path d="M640,455 660,450 688,510 665,518Z"/>
                    <path d="M572,415 590,412 598,445 578,445Z"/>
                    <path d="M1080,550 1110,545 1112,570 1095,580Z"/>
                    <path d="M1040,295 1055,295 1058,315 1040,315Z"/>
                    <circle cx="1050" cy="360" r="7"/>
                    <circle cx="1040" cy="408" r="7"/>
                    <path d="M1172,800 1200,785 1218,795 1200,810Z"/>
                    <path d="M1410,530 1430,510 1455,530 1430,550Z"/>
                    <circle cx="1353" cy="132" r="11"/>
                    <circle cx="497" cy="213" r="7"/>
                    <circle cx="843" cy="143" r="7"/>
                    <circle cx="817" cy="18" r="7"/>
                </g>
                <path d="M557,380 A14 14 0 1 0 585,385" fill="none" stroke="#fbd84b" stroke-width="6"/>
                <g fill="#d3a0df">
                    <path d="M458,110 482,118 488,150 462,150Z"/>
                    <circle cx="425" cy="108" r="9"/>
                    <path d="M765,12 785,12 790,35 770,30Z"/>
                    <circle cx="523" cy="236" r="9"/>
                    <circle cx="675" cy="172" r="10"/>
                    <path d="M775,168 790,165 795,180 780,182Z"/>
                    <path d="M815,130 835,135 838,155 825,155Z"/>
                    <circle cx="597" cy="355" r="8"/>
                    <circle cx="585" cy="455" r="11"/>
                    <path d="M640,485 652,480 652,510 642,510Z"/>
                </g>
                <circle cx="455" cy="162" r="14" fill="#ee8a36"/>
                <circle cx="600" cy="372" r="6" fill="#5bc0b8"/>
                <circle cx="912" cy="30" r="14" fill="#5bc0b8"/>
            </g>

            <!-- Caspian and Caucasus, traced at 3x from (560,660) -->
            <g transform="translate(560,660) scale(.33333)">
                <path d="M0,0 215,20 190,90 260,180 210,240 225,290 265,370 255,480 140,420 0,400Z" fill="#bde8d6"/>
                <path d="M100,110 150,70 200,100 250,180 210,215 130,170Z" fill="#f8f5ef"/>
                <path d="M0,410 130,400 250,480 300,520 600,660 0,660Z" fill="#f8f5ef"/>
                <path d="M220,30 380,20 600,0 600,660 300,520 385,490 410,225 365,165 270,180 200,100Z" fill="#f8f5ef"/>
                <path d="M290,510 420,500 370,535Z" fill="#bde8d6"/>
                <g fill="#7ecbe3">
                    <path d="M300,155 365,165 370,205 395,205 410,225 340,220 310,245 310,280 350,320 345,345 390,325 405,378 360,395 358,410 385,440 385,510 330,510 260,480 255,440 275,400 265,370 240,330 225,290 225,260 210,240 250,210Z"/>
                    <path d="M0,280 40,290 65,330 65,360 0,370Z"/>
                    <path d="M495,240 510,200 535,215 535,255 515,240Z"/>
                    <path d="M95,445 115,442 105,458Z"/>
                </g>
                <g fill="none" stroke="#333" stroke-width="2.200">
                    <path d="M435,230 500,210 590,280M435,230 437,360 465,360 490,315 540,340M390,325 437,360M345,345 390,325"/>
                    <path d="M385,490 465,463 530,490 600,540M200,90 215,30 245,45 270,10M200,95 235,130 270,185"/>
                    <path d="M115,365 185,370 245,345M115,365 130,420 190,445 240,430 240,455M130,420 150,490 185,545 170,590M0,510 70,495 145,500M60,540 50,620M190,445 215,425"/>
                </g>
                <g fill="none" stroke="#667" stroke-width="2.200" stroke-dasharray="12 7">
                    <path d="M60,30 90,90 130,130 170,180M30,160 60,220 130,210 190,260M0,240 80,250 150,280 190,320"/>
                </g>
                <g fill="#ec6e6e">
                    <path d="M135,90 165,95 165,110 140,118Z"/>
                    <path d="M20,280 50,300 45,305 20,295Z"/>
                    <path d="M205,300 230,300 220,325 200,325Z"/>
                    <path d="M140,325 155,325 158,355 143,355Z"/>
                    <path d="M0,368 30,368 30,385 0,385Z"/>
                    <path d="M135,400 150,405 145,415Z"/>
                    <path d="M245,510 270,485 290,495 270,518 250,520Z"/>
                    <path d="M315,530 330,545 315,558 300,545Z"/>
                    <path d="M135,505 160,510 150,522 135,520Z"/>
                    <path d="M365,630 375,630 400,655 385,660Z"/>
                    <circle cx="280" cy="392" r="8"/>
                    <circle cx="102" cy="268" r="9"/>
                    <circle cx="328" cy="640" r="6"/>
                </g>
                <circle cx="352" cy="518" r="13" fill="#d3a0df"/>
                <circle cx="285" cy="498" r="10" fill="#d3a0df"/>
                <circle cx="170" cy="562" r="8" fill="#f7dc6a"/>
            </g>

            <!-- Equator -->
            <path d="M0 1168H1290" stroke="#5a5a5a" stroke-width="2" stroke-dasharray="16 6"/>

            <!-- Ocean names -->
            <g font-size="33" font-weight="500" fill="#2f7596" letter-spacing="5.500" text-anchor="middle">
                <text x="99" y="1390">South</text>
                <text x="99" y="1437">Atlantic</text>
                <text x="99" y="1484" fill="#5a8ba3">Ocean</text>
                <text x="908" y="1350">Indian</text>
                <text x="908" y="1396">Ocean</text>
            </g>

            <!-- Country names -->
            <g font-size="26" font-weight="600" fill="#14181c" stroke="#fff" stroke-width="6" stroke-linejoin="round" paint-order="stroke" text-anchor="middle">
                <text x="68" y="442">Iceland</text>
                <text x="452" y="389">Finland</text>
                <text x="371" y="452">Sweden</text>
                <text x="298" y="518">Norway</text>
                <text x="193" y="581">United</text>
                <text x="193" y="614">Kingdom</text>
                <text x="388" y="645">Poland</text>
                <text x="504" y="688">Ukraine</text>
                <text x="331" y="768">Italy</text>
                <text x="197" y="786">Spain</text>
                <text x="531" y="817">Türkiye</text>
                <text x="594" y="881">Iraq</text>
                <text x="242" y="928">Algeria</text>
                <text x="376" y="939">Libya</text>
                <text x="483" y="926">Egypt</text>
                <text x="1028" y="496">Russia</text>
                <text x="802" y="708">Kazakhstan</text>
                <text x="1108" y="725">Mongolia</text>
                <text x="1113" y="833">China</text>
                <text x="807" y="867">Afghanistan</text>
                <text x="814" y="921">Pakistan</text>
                <text x="907" y="978">India</text>
                <text x="1090" y="1005">Thailand</text>
                <text x="1218" y="1213">Indonesia</text>
                <text x="637" y="1365">Madagascar</text>
                <text x="213" y="1024">Mali</text>
                <text x="313" y="1025">Niger</text>
                <text x="486" y="1031">Sudan</text>
                <text x="297" y="1097">Nigeria</text>
                <text x="566" y="1105">Ethiopia</text>
                <text x="551" y="1175">Kenya</text>
                <text x="423" y="1192">DRC</text>
                <text x="544" y="1232">Tanzania</text>
                <text x="368" y="1285">Angola</text>
                <text x="363" y="1346">Namibia</text>
                <text x="396" y="1482">South Africa</text>
            </g>

            <!-- Google mark -->
            <text x="17" y="1481" font-size="56" font-weight="500" letter-spacing="-1" style="font-family:Roboto,sans-serif" stroke="#d8eff7" stroke-opacity=".75" stroke-width="9" stroke-linejoin="round" paint-order="stroke"><tspan fill="#5385e6">G</tspan><tspan fill="#dc4a3e">o</tspan><tspan fill="#f0b92a">o</tspan><tspan fill="#5385e6">g</tspan><tspan fill="#3fa757">l</tspan><tspan fill="#dc4a3e">e</tspan></text>
        </svg>
    </div>
    <div class="h-[5px] bg-[#dfe3e3]"></div>

    <!-- Data toggle -->
    <div class="bg-white h-[204px] border-b-[3px] border-[#dcdcdc] pt-[37px] px-[48px] grid grid-cols-2 gap-[36px] items-start">
        <button class="h-[142px] rounded-[26px] border-[6px] border-[#3478f6] bg-white text-[#3478f6] flex items-center justify-center gap-[28px] text-[48px] font-bold">
            <svg class="w-[45px] h-[47px]" viewBox="0 0 45 47" fill="#3478f6">
                <circle cx="22.500" cy="11.500" r="11.500"/>
                <path d="M0 44C0 33 9 25 22.500 25S45 33 45 44Q45 47 42 47H3Q0 47 0 44Z"/>
            </svg>
            <span>My Data</span>
        </button>
        <button class="h-[142px] rounded-[26px] bg-[#3478f6] text-white flex items-center justify-center gap-[26px] text-[48px] font-bold">
            <svg class="w-[48px] h-[48px]" viewBox="0 0 48 48">
                <circle cx="24" cy="24" r="24" fill="#fff"/>
                <g fill="none" stroke="#3478f6" stroke-width="3">
                    <ellipse cx="24" cy="24" rx="11" ry="21"/>
                    <path d="M24 3V45M4 15H44M2 24H46M4 33H44"/>
                </g>
            </svg>
            <span>World Data</span>
        </button>
    </div>

    <div class="h-[25px]"></div>

    <!-- Endangered list -->
    <section class="bg-white h-[284px] border-b-[4px] border-[#dcdcdc] pl-[49px] pt-[34px]">
        <h2 class="text-[58px] leading-[76px] font-black text-[#333] tracking-[0.9px]">Endangered Animals in Your Area</h2>
        <p class="mt-[32px] text-[42px] leading-[52px] italic text-[#999]">No endangered species found nearby</p>
    </section>

    <!-- Species filter -->
    <div class="flex items-start">
        <label class="pl-[2px] pt-[44px] w-[407px] text-[44px] leading-[50px] font-bold text-[#333] whitespace-nowrap">Filter by Species:</label>
        <div class="w-[881px] h-[138px] rounded-[30px] border-[3px] border-[#e0e0e0] bg-[#f9f9f9] flex items-center justify-between pl-[49px] pr-[56px]">
            <span class="text-[47px] font-bold text-[#999]">All Species</span>
            <svg class="w-[40px] h-[22px]" viewBox="0 0 40 22"><path d="M2 2L20 20L38 2" fill="none" stroke="#555" stroke-width="4.500"/></svg>
        </div>
    </div>
</body>
</html>
